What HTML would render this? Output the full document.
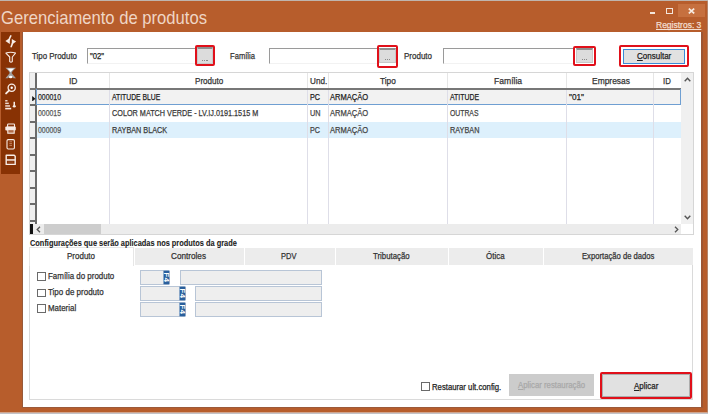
<!DOCTYPE html>
<html><head><meta charset="utf-8"><style>
html,body{margin:0;padding:0;width:708px;height:414px;overflow:hidden;background:#b75d2c}
body>div{position:absolute}
.t{position:absolute;white-space:nowrap;-webkit-text-stroke:0.25px currentColor;font-family:"Liberation Sans",sans-serif;line-height:normal;transform-origin:0 0}
</style></head><body>
<div style="left:0px;top:0px;width:708px;height:414px;background:#b75d2c"></div>
<div style="left:0px;top:0px;width:708px;height:1px;background:#bfb5ae"></div>
<div style="left:0px;top:412.5px;width:708px;height:1.5px;background:#c2c2c8"></div>
<div style="left:707px;top:1px;width:1px;height:411px;background:#b3856b"></div>
<div style="left:701px;top:32px;width:1.5px;height:376px;background:#9c5634"></div>
<div style="left:21.9px;top:32px;width:1px;height:375px;background:#985a3a"></div>
<div style="left:22px;top:407px;width:681px;height:1px;background:#9c5a3a"></div>
<div style="left:0px;top:411.5px;width:708px;height:1px;background:#cfa58e"></div>
<div style="left:678px;top:4px;width:27px;height:13px;background:#c6703f"></div>
<div style="left:650px;top:12px;width:5px;height:2px;background:#f4e6dc"></div>
<div style="left:666px;top:8px;width:7px;height:6px;border:1.3px solid #f4e6dc;box-sizing:border-box"></div>
<svg style="left:687.5px;top:7.8px;width:7px;height:6px;position:absolute" viewBox="0 0 7 6"><path d="M0.8 0.6L6.2 5.4M6.2 0.6L0.8 5.4" stroke="#f7ebe2" stroke-width="1.7"/></svg>
<div style="left:1.2px;top:31.8px;width:18.6px;height:142px;background:#883204"></div>
<div style="left:22.9px;top:32.2px;width:677.9px;height:374.6px;background:#ffffff"></div>
<div style="left:87px;top:48px;width:109px;height:16px;background:#fff;border-top:1px solid #9a9a9a;border-left:1px solid #9a9a9a;border-right:1px solid #f2f2f2;border-bottom:1px solid #f2f2f2;box-sizing:border-box"></div>
<div style="left:269px;top:48px;width:109px;height:16px;background:#fff;border-top:1px solid #9a9a9a;border-left:1px solid #9a9a9a;border-right:1px solid #f2f2f2;border-bottom:1px solid #f2f2f2;box-sizing:border-box"></div>
<div style="left:443px;top:48px;width:131px;height:16px;background:#fff;border-top:1px solid #9a9a9a;border-left:1px solid #9a9a9a;border-right:1px solid #f2f2f2;border-bottom:1px solid #f2f2f2;box-sizing:border-box"></div>
<div style="left:195px;top:45px;width:20px;height:21px;border:2px solid #e0101a;border-radius:2px;box-sizing:border-box;background:#fff"></div>
<div style="left:197px;top:47px;width:16px;height:17px;background:#dcdcdc;border-top:2px solid #8f8f8f;border-left:1px solid #c8c8c8;border-right:1px solid #c8c8c8;border-bottom:1px solid #c8c8c8;box-sizing:border-box"></div>
<div style="left:202.0px;top:59.5px;width:1.2px;height:1.1px;background:#8a8a8a"></div>
<div style="left:204.2px;top:59.5px;width:1.2px;height:1.1px;background:#8a8a8a"></div>
<div style="left:206.4px;top:59.5px;width:1.2px;height:1.1px;background:#8a8a8a"></div>
<div style="left:377px;top:45px;width:21px;height:23px;border:2px solid #e0101a;border-radius:2px;box-sizing:border-box;background:#fff"></div>
<div style="left:379px;top:48px;width:17px;height:15px;background:#dcdcdc;border-top:2px solid #8f8f8f;border-left:1px solid #c8c8c8;border-right:1px solid #c8c8c8;border-bottom:1px solid #c8c8c8;box-sizing:border-box"></div>
<div style="left:384.5px;top:58.5px;width:1.2px;height:1.1px;background:#8a8a8a"></div>
<div style="left:386.7px;top:58.5px;width:1.2px;height:1.1px;background:#8a8a8a"></div>
<div style="left:388.9px;top:58.5px;width:1.2px;height:1.1px;background:#8a8a8a"></div>
<div style="left:573px;top:46px;width:23px;height:20px;border:2px solid #e0101a;border-radius:2px;box-sizing:border-box;background:#fff"></div>
<div style="left:576px;top:48px;width:17px;height:15px;background:#dcdcdc;border-top:2px solid #8f8f8f;border-left:1px solid #c8c8c8;border-right:1px solid #c8c8c8;border-bottom:1px solid #c8c8c8;box-sizing:border-box"></div>
<div style="left:581.5px;top:58.5px;width:1.2px;height:1.1px;background:#8a8a8a"></div>
<div style="left:583.7px;top:58.5px;width:1.2px;height:1.1px;background:#8a8a8a"></div>
<div style="left:585.9px;top:58.5px;width:1.2px;height:1.1px;background:#8a8a8a"></div>
<div style="left:619px;top:45px;width:70px;height:22px;border:2px solid #e0101a;border-radius:2px;box-sizing:border-box"></div>
<div style="left:623px;top:49px;width:62px;height:15px;background:#e1e1e1;border:1.5px solid #3a8ad6;box-sizing:border-box"></div>
<div style="left:29px;top:72px;width:665px;height:163px;border:1px solid #d6d6d6;box-sizing:border-box;background:#fff"></div>
<div style="left:30px;top:73px;width:6px;height:151px;background:#efefef"></div>
<div style="left:35px;top:73px;width:1.5px;height:151px;background:#6b6b6b"></div>
<div style="left:30px;top:104px;width:6px;height:2px;background:#6b6b6b"></div>
<div style="left:30px;top:121px;width:6px;height:2px;background:#6b6b6b"></div>
<div style="left:30px;top:137px;width:6px;height:2px;background:#6b6b6b"></div>
<div style="left:30px;top:154px;width:6px;height:2px;background:#6b6b6b"></div>
<div style="left:30px;top:170px;width:6px;height:2px;background:#6b6b6b"></div>
<div style="left:30px;top:187px;width:6px;height:2px;background:#6b6b6b"></div>
<div style="left:30px;top:203px;width:6px;height:2px;background:#6b6b6b"></div>
<div style="left:30px;top:220px;width:6px;height:2px;background:#6b6b6b"></div>
<div style="left:30px;top:88px;width:651px;height:1.5px;background:#777"></div>
<div style="left:37px;top:90px;width:644px;height:15px;background:#f2f2f2"></div>
<div style="left:37px;top:122px;width:644px;height:16px;background:#ddf0fc"></div>
<div style="left:36px;top:89px;width:645px;height:16px;border:1px solid #6f9fd2;border-top:none;box-sizing:border-box"></div>
<div style="left:108.7px;top:73px;width:1px;height:15px;background:#e6e6e6"></div>
<div style="left:108.7px;top:90px;width:1px;height:134px;background:#dedee8"></div>
<div style="left:307.4px;top:73px;width:1px;height:15px;background:#e6e6e6"></div>
<div style="left:307.4px;top:90px;width:1px;height:134px;background:#dedee8"></div>
<div style="left:327.7px;top:73px;width:1px;height:15px;background:#e6e6e6"></div>
<div style="left:327.7px;top:90px;width:1px;height:134px;background:#dedee8"></div>
<div style="left:447.1px;top:73px;width:1px;height:15px;background:#e6e6e6"></div>
<div style="left:447.1px;top:90px;width:1px;height:134px;background:#dedee8"></div>
<div style="left:566.4px;top:73px;width:1px;height:15px;background:#e6e6e6"></div>
<div style="left:566.4px;top:90px;width:1px;height:134px;background:#dedee8"></div>
<div style="left:652.8px;top:73px;width:1px;height:15px;background:#e6e6e6"></div>
<div style="left:652.8px;top:90px;width:1px;height:134px;background:#dedee8"></div>
<svg style="position:absolute;left:32.2px;top:95.8px;width:3.6px;height:5.6px" viewBox="0 0 4 7"><path d="M0 0L4 3.5L0 7Z" fill="#111"/></svg>
<div style="left:681px;top:73px;width:12px;height:151px;background:#f0f0f0"></div>
<svg style="position:absolute;left:684px;top:77px;width:7px;height:5px" viewBox="0 0 7 5"><path d="M0.7 4.3L3.5 1.3L6.3 4.3" stroke="#555" stroke-width="1.4" fill="none"/></svg>
<svg style="position:absolute;left:684px;top:215px;width:7px;height:5px" viewBox="0 0 7 5"><path d="M0.7 0.7L3.5 3.7L6.3 0.7" stroke="#555" stroke-width="1.4" fill="none"/></svg>
<div style="left:30px;top:224px;width:651px;height:10px;background:#ececec"></div>
<div style="left:44px;top:224px;width:57px;height:10px;background:#cdcdcd"></div>
<div style="left:30px;top:224px;width:3px;height:10px;background:#111"></div>
<svg style="position:absolute;left:36px;top:226px;width:5px;height:7px" viewBox="0 0 5 7"><path d="M4 0.7L1.2 3.5L4 6.3" stroke="#555" stroke-width="1.3" fill="none"/></svg>
<svg style="position:absolute;left:674px;top:226px;width:5px;height:7px" viewBox="0 0 5 7"><path d="M1 0.7L3.8 3.5L1 6.3" stroke="#555" stroke-width="1.3" fill="none"/></svg>
<div style="left:29px;top:264px;width:664px;height:135.5px;border:1px solid #dadada;box-sizing:border-box;background:#fff"></div>
<div style="left:29px;top:247px;width:105px;height:19px;background:#fff;border:1px solid #e6e6e6;border-bottom:none;box-sizing:border-box"></div>
<div style="left:133.5px;top:248px;width:110.1px;height:17px;background:#ececec;border-left:1px solid #fff;box-sizing:border-box"></div>
<div style="left:243.6px;top:248px;width:91.4px;height:17px;background:#ececec;border-left:1px solid #fff;box-sizing:border-box"></div>
<div style="left:335px;top:248px;width:113.30000000000001px;height:17px;background:#ececec;border-left:1px solid #fff;box-sizing:border-box"></div>
<div style="left:448.3px;top:248px;width:94.49999999999994px;height:17px;background:#ececec;border-left:1px solid #fff;box-sizing:border-box"></div>
<div style="left:542.8px;top:248px;width:150.20000000000005px;height:17px;background:#ececec;border-left:1px solid #fff;box-sizing:border-box"></div>
<div style="left:37px;top:272px;width:9px;height:8.5px;border:1px solid #6a6a6a;box-sizing:border-box;background:#fff"></div>
<div style="left:37px;top:288.5px;width:9px;height:8.5px;border:1px solid #6a6a6a;box-sizing:border-box;background:#fff"></div>
<div style="left:37px;top:304px;width:9px;height:8.5px;border:1px solid #6a6a6a;box-sizing:border-box;background:#fff"></div>
<div style="left:140px;top:270px;width:24px;height:15px;background:#eeeeee;border:1px solid #b8c5d6;box-sizing:border-box"></div>
<div style="left:163px;top:270px;width:7px;height:15px;background:#2a5f9c;border:1px solid #8aa6c6;border-radius:1.5px;box-sizing:border-box"></div>
<svg style="position:absolute;left:163px;top:270px;width:7px;height:15px" viewBox="0 0 7 15"><text transform="translate(1.2,2.6) rotate(90)" font-family="Liberation Sans" font-weight="bold" font-size="7.6" letter-spacing="0.6" fill="#fff">F4</text></svg>
<div style="left:180px;top:270px;width:142px;height:15px;background:#eeeeee;border:1px solid #b8c5d6;box-sizing:border-box"></div>
<div style="left:140px;top:286px;width:40px;height:15px;background:#eeeeee;border:1px solid #b8c5d6;box-sizing:border-box"></div>
<div style="left:179px;top:286px;width:7px;height:15px;background:#2a5f9c;border:1px solid #8aa6c6;border-radius:1.5px;box-sizing:border-box"></div>
<svg style="position:absolute;left:179px;top:286px;width:7px;height:15px" viewBox="0 0 7 15"><text transform="translate(1.2,2.6) rotate(90)" font-family="Liberation Sans" font-weight="bold" font-size="7.6" letter-spacing="0.6" fill="#fff">F4</text></svg>
<div style="left:195px;top:286px;width:127px;height:15px;background:#eeeeee;border:1px solid #b8c5d6;box-sizing:border-box"></div>
<div style="left:140px;top:302px;width:40px;height:15px;background:#eeeeee;border:1px solid #b8c5d6;box-sizing:border-box"></div>
<div style="left:179px;top:302px;width:7px;height:15px;background:#2a5f9c;border:1px solid #8aa6c6;border-radius:1.5px;box-sizing:border-box"></div>
<svg style="position:absolute;left:179px;top:302px;width:7px;height:15px" viewBox="0 0 7 15"><text transform="translate(1.2,2.6) rotate(90)" font-family="Liberation Sans" font-weight="bold" font-size="7.6" letter-spacing="0.6" fill="#fff">F4</text></svg>
<div style="left:195px;top:302px;width:127px;height:15px;background:#eeeeee;border:1px solid #b8c5d6;box-sizing:border-box"></div>
<div style="left:420.6px;top:382px;width:9.2px;height:9px;border:1px solid #6a6a6a;box-sizing:border-box;background:#fff"></div>
<div style="left:509px;top:374px;width:85px;height:22px;background:#cccccc"></div>
<div style="left:600px;top:372px;width:92px;height:26.5px;border:2px solid #e0101a;border-radius:2px;box-sizing:border-box"></div>
<div style="left:602px;top:374px;width:88px;height:22.5px;background:#e1e1e1;border:1px solid #adadad;box-sizing:border-box"></div>

<svg style="position:absolute;left:0;top:30px;width:22px;height:145px" viewBox="0 30 22 145">
 <path d="M5.4 40.9 L9.8 37.9 L9.8 44.1 Z" fill="#f7ece6"/>
 <path d="M9.2 39.6 Q9.7 37.6 10.8 35.9" stroke="#f7ece6" stroke-width="1.6" stroke-linecap="round" fill="none"/>
 <path d="M16.1 41.6 L11.8 38.9 L11.8 44.7 Z" fill="#f7ece6"/>
 <path d="M12.4 43.4 Q12 45.2 11.2 46.7" stroke="#f7ece6" stroke-width="1.6" stroke-linecap="round" fill="none"/>
 <path d="M5.9 53.1 Q10.7 51.4 15.5 53.1 L12.3 57 V61.6 Q11 62.6 9.7 61.6 V57 Z" fill="none" stroke="#f7ece6" stroke-width="1.1" stroke-linejoin="round"/>
 <path d="M5.4 67.8 H16 Q12.6 70.8 11.6 73 Q13.4 75.4 16 78.2 H13.6 Q12 76.6 10.7 76.2 Q9.4 76.6 7.8 78.2 H5.4 Q8 75.4 9.8 73 Q8.8 70.8 5.4 67.8 Z" fill="#a19e9c"/>
 <path d="M7.2 68.4 H14.2 Q11.6 70.4 10.7 72.2 Q9.8 70.4 7.2 68.4 Z" fill="#ffffff"/>
 <ellipse cx="10.7" cy="77" rx="1.8" ry="1.3" fill="#ffffff"/>
 <circle cx="11.7" cy="87.8" r="3.6" fill="none" stroke="#f7ece6" stroke-width="1.3"/>
 <circle cx="11.7" cy="87.8" r="1.2" fill="#ffffff"/>
 <path d="M9.2 90.4 L6.1 93.4" stroke="#f7ece6" stroke-width="1.9" stroke-linecap="round"/>
 <g fill="#f7ece6">
  <rect x="5.2" y="100" width="2.3" height="1.5" opacity="0.9"/>
  <rect x="5.2" y="102.6" width="3.6" height="1.5" opacity="0.9"/>
  <rect x="5.2" y="105.2" width="4.8" height="1.5" opacity="0.9"/>
  <rect x="5.2" y="107.8" width="6" height="1.6"/>
  <rect x="13.5" y="101.8" width="1.5" height="3.6"/>
  <ellipse cx="14.25" cy="106.2" rx="1.5" ry="1.3"/>
 </g>
 <rect x="7.6" y="124" width="6.9" height="3.2" rx="0.8" fill="none" stroke="#f7ece6" stroke-width="1.1"/>
 <rect x="5.3" y="126.6" width="10.5" height="3.8" rx="1" fill="#f7ece6"/>
 <rect x="7.8" y="129.6" width="6.4" height="3.6" fill="#b06a48" stroke="#f7ece6" stroke-width="1.1"/>
 <rect x="7" y="139.6" width="7.4" height="9.4" rx="1.2" fill="none" stroke="#f7ece6" stroke-width="1.1"/>
 <path d="M9.4 141.8 H12 M9.4 143.6 H12 M9.4 145.4 H12" stroke="#c98a68" stroke-width="0.9"/>
 <path d="M6.2 155.2 H14.2 L15.2 156.2 V164.4 H6.2 Z" fill="none" stroke="#f7ece6" stroke-width="1.4" stroke-linejoin="round"/>
 <rect x="6.2" y="159.2" width="9" height="1.5" fill="#f7ece6"/>
 <path d="M8.2 162 H13.2 M8.2 163.2 H13.2" stroke="#a85f3c" stroke-width="0.6"/>
</svg>

<span id="t0" class="t" style="left:32px;top:50.86px;font-size:9px;font-weight:400;color:#333;transform:scaleX(0.8789);">Tipo Produto</span>
<span id="t1" class="t" style="left:90px;top:50.56px;font-size:9px;font-weight:400;color:#222;transform:scaleX(0.8533);">"02"</span>
<span id="t2" class="t" style="left:229.6px;top:50.86px;font-size:9px;font-weight:400;color:#333;transform:scaleX(0.8470);">Família</span>
<span id="t3" class="t" style="left:404px;top:50.86px;font-size:9px;font-weight:400;color:#333;transform:scaleX(0.8880);">Produto</span>
<span id="t4" class="t" style="left:637.3px;top:50.86px;font-size:9px;font-weight:400;color:#222;transform:scaleX(0.8902);"><u>C</u>onsultar</span>
<span id="t5" class="t" style="left:68.5px;top:76.06px;font-size:9px;font-weight:400;color:#333;transform:scaleX(0.9444);">ID</span>
<span id="t6" class="t" style="left:194.6px;top:76.06px;font-size:9px;font-weight:400;color:#333;transform:scaleX(0.8975);">Produto</span>
<span id="t7" class="t" style="left:309.5px;top:76.06px;font-size:9px;font-weight:400;color:#333;transform:scaleX(0.9045);">Und.</span>
<span id="t8" class="t" style="left:380.2px;top:76.06px;font-size:9px;font-weight:400;color:#333;transform:scaleX(0.9193);">Tipo</span>
<span id="t9" class="t" style="left:493.9px;top:76.06px;font-size:9px;font-weight:400;color:#333;transform:scaleX(0.9520);">Família</span>
<span id="t10" class="t" style="left:591.5px;top:76.06px;font-size:9px;font-weight:400;color:#333;transform:scaleX(0.9379);">Empresas</span>
<span id="t11" class="t" style="left:663.3px;top:76.06px;font-size:9px;font-weight:400;color:#333;transform:scaleX(0.8667);">ID</span>
<span id="t12" class="t" style="left:37.8px;top:91.76px;font-size:9px;font-weight:400;color:#2a2a2a;transform:scaleX(0.7655);">000010</span>
<span id="t13" class="t" style="left:111.5px;top:91.76px;font-size:9px;font-weight:400;color:#222;transform:scaleX(0.7565);-webkit-text-stroke:0.25px #222;">ATITUDE BLUE</span>
<span id="t14" class="t" style="left:310px;top:91.76px;font-size:9px;font-weight:400;color:#222;transform:scaleX(0.7990);">PC</span>
<span id="t15" class="t" style="left:330.2px;top:91.76px;font-size:9px;font-weight:400;color:#222;transform:scaleX(0.8393);-webkit-text-stroke:0.25px #222;">ARMAÇÃO</span>
<span id="t16" class="t" style="left:449.8px;top:91.76px;font-size:9px;font-weight:400;color:#222;transform:scaleX(0.7663);-webkit-text-stroke:0.25px #222;">ATITUDE</span>
<span id="t17" class="t" style="left:569px;top:91.76px;font-size:9px;font-weight:400;color:#222;transform:scaleX(0.9143);">"01"</span>
<span id="t18" class="t" style="left:37.8px;top:108.45px;font-size:9px;font-weight:400;color:#5a5a5a;transform:scaleX(0.7655);">000015</span>
<span id="t19" class="t" style="left:111.5px;top:108.45px;font-size:9px;font-weight:400;color:#3a3a3a;transform:scaleX(0.8065);">COLOR MATCH VERDE - LV.IJ.0191.1515 M</span>
<span id="t20" class="t" style="left:310px;top:108.45px;font-size:9px;font-weight:400;color:#444;transform:scaleX(0.8077);">UN</span>
<span id="t21" class="t" style="left:330.2px;top:108.45px;font-size:9px;font-weight:400;color:#444;transform:scaleX(0.8393);">ARMAÇÃO</span>
<span id="t22" class="t" style="left:449.8px;top:108.45px;font-size:9px;font-weight:400;color:#444;transform:scaleX(0.7597);">OUTRAS</span>
<span id="t23" class="t" style="left:37.8px;top:124.86px;font-size:9px;font-weight:400;color:#5a5a5a;transform:scaleX(0.7655);">000009</span>
<span id="t24" class="t" style="left:111.5px;top:124.86px;font-size:9px;font-weight:400;color:#3a3a3a;transform:scaleX(0.8075);">RAYBAN BLACK</span>
<span id="t25" class="t" style="left:310px;top:124.86px;font-size:9px;font-weight:400;color:#444;transform:scaleX(0.7990);">PC</span>
<span id="t26" class="t" style="left:330.2px;top:124.86px;font-size:9px;font-weight:400;color:#444;transform:scaleX(0.8393);">ARMAÇÃO</span>
<span id="t27" class="t" style="left:449.8px;top:124.86px;font-size:9px;font-weight:400;color:#444;transform:scaleX(0.8089);">RAYBAN</span>
<span id="t28" class="t" style="left:29.7px;top:238.35px;font-size:9px;font-weight:700;color:#222;transform:scaleX(0.8221);-webkit-text-stroke:0.1px #222;">Configurações que serão aplicadas nos produtos da grade</span>
<span id="t29" class="t" style="left:66.5px;top:251.46px;font-size:9px;font-weight:400;color:#333;transform:scaleX(0.8880);">Produto</span>
<span id="t30" class="t" style="left:171px;top:251.46px;font-size:9px;font-weight:400;color:#333;transform:scaleX(0.9084);">Controles</span>
<span id="t31" class="t" style="left:281.2px;top:251.46px;font-size:9px;font-weight:400;color:#333;transform:scaleX(0.8317);">PDV</span>
<span id="t32" class="t" style="left:373px;top:251.46px;font-size:9px;font-weight:400;color:#333;transform:scaleX(0.8699);">Tributação</span>
<span id="t33" class="t" style="left:486.4px;top:251.46px;font-size:9px;font-weight:400;color:#333;transform:scaleX(0.8851);">Ótica</span>
<span id="t34" class="t" style="left:581.8px;top:251.46px;font-size:9px;font-weight:400;color:#333;transform:scaleX(0.8511);">Exportação de dados</span>
<span id="t35" class="t" style="left:47.7px;top:270.56px;font-size:9px;font-weight:400;color:#333;transform:scaleX(0.8834);">Família do produto</span>
<span id="t36" class="t" style="left:47.7px;top:286.96px;font-size:9px;font-weight:400;color:#333;transform:scaleX(0.8881);">Tipo de produto</span>
<span id="t37" class="t" style="left:47.7px;top:302.75px;font-size:9px;font-weight:400;color:#333;transform:scaleX(0.8808);">Material</span>
<span id="t38" class="t" style="left:432px;top:381.75px;font-size:9px;font-weight:400;color:#222;transform:scaleX(0.8591);">Restaurar ult.config.</span>
<span id="t39" class="t" style="left:517.5px;top:380.16px;font-size:9px;font-weight:400;color:#a8a8a8;transform:scaleX(0.8664);"><u>A</u>plicar restauração</span>
<span id="t40" class="t" style="left:634px;top:380.66px;font-size:9px;font-weight:400;color:#222;transform:scaleX(0.8826);"><u>A</u>plicar</span>
<span class="t" style="left:1.4px;top:6.86px;font-size:18.5px;color:#efd6c6;transform:scaleX(0.898);-webkit-text-stroke:0" id="title">Gerenciamento de produtos</span>
<span class="t" style="left:656px;top:19.81px;font-size:8.5px;color:#f3ddd0;text-decoration:underline;text-decoration-skip-ink:none" id="reg">Registros: 3</span>
</body></html>
